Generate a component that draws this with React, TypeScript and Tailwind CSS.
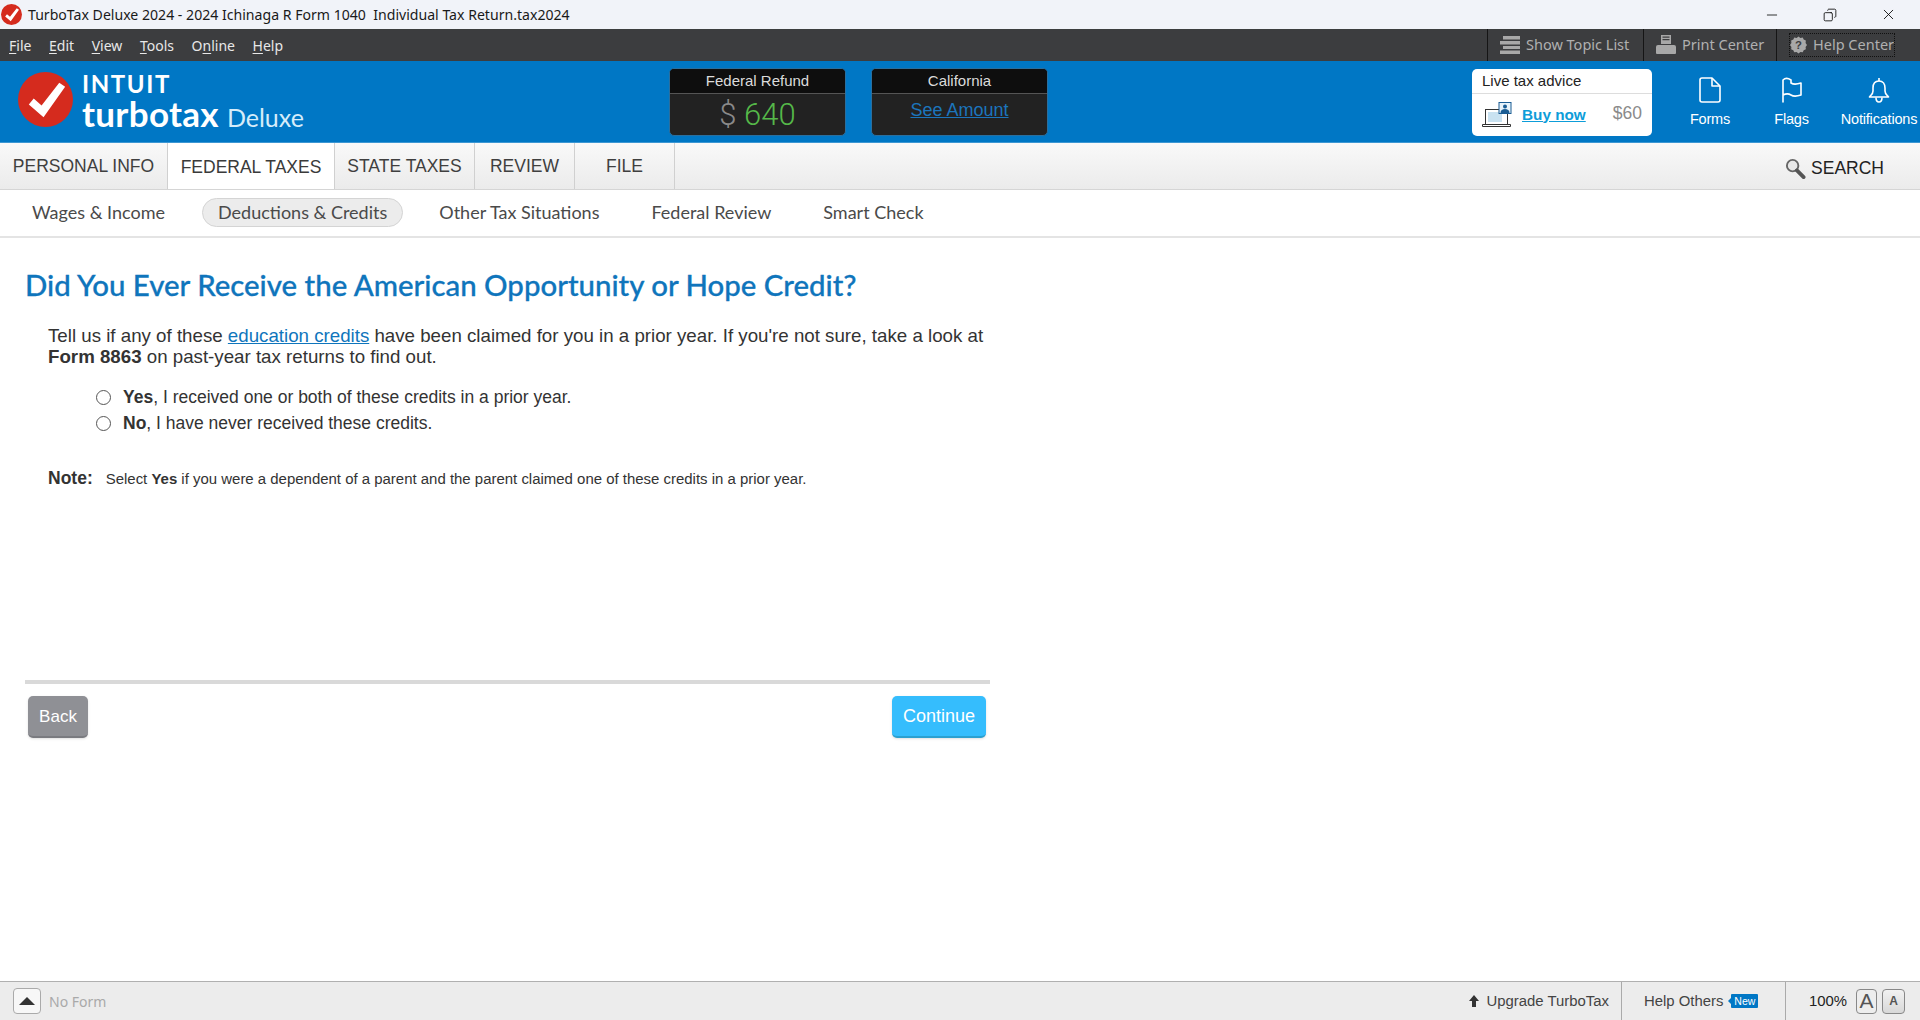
import type { ReactNode } from 'react';
import { Copy, Minus, X } from 'lucide-react';

const arial = "font-['Liberation_Sans',Arial,sans-serif]";

function Mnemonic({ before = '', letter, after }: { before?: string; letter: string; after: string }) {
  return (
    <span>
      {before}
      <span className="underline underline-offset-2">{letter}</span>
      {after}
    </span>
  );
}

function CheckLogo({ size }: { size: number }) {
  return (
    <svg width={size} height={size} viewBox="0 0 56 56" className="shrink-0">
      <circle cx="28" cy="28" r="28" fill="#d52b1e" />
      <path d="M11 33l5-6 8 7L42 11l6 4-22 31z" fill="#fff" />
    </svg>
  );
}

function TitleBar() {
  return (
    <div className="flex h-[29px] items-center bg-[#f1f3f9] pl-[1px] font-['Noto_Sans',sans-serif] text-[14.1px] text-[#1a1a1a]">
      <CheckLogo size={21} />
      <span className="ml-[6px] whitespace-pre">TurboTax Deluxe 2024 - 2024 Ichinaga R Form 1040  Individual Tax Return.tax2024</span>
      <div className="ml-auto flex items-center gap-[43px] pr-[23px] text-black">
        <Minus size={16} strokeWidth={1.2} />
        <Copy size={14} strokeWidth={1.4} className="-scale-x-100" />
        <X size={17} strokeWidth={1.2} />
      </div>
    </div>
  );
}

function ToolButton({ icon, label, className, dotted }: { icon: ReactNode; label: string; className: string; dotted?: boolean }) {
  return (
    <div className={`flex h-full items-center border-l border-[#151515] ${className}`}>
      <div className={`flex items-center gap-[6px] whitespace-nowrap ${dotted ? 'outline-1 outline-dotted outline-[#111]' : ''}`}>
        {icon}
        <span>{label}</span>
      </div>
    </div>
  );
}

function MenuBar() {
  return (
    <div className="flex h-[32px] items-center bg-[#3c3d3f] font-['Noto_Sans',sans-serif] text-[14px]">
      <div className="flex gap-[17.6px] pl-[9px] text-[#e8e8e8]">
        <Mnemonic letter="F" after="ile" />
        <Mnemonic letter="E" after="dit" />
        <Mnemonic letter="V" after="iew" />
        <Mnemonic letter="T" after="ools" />
        <Mnemonic before="O" letter="n" after="line" />
        <Mnemonic letter="H" after="elp" />
      </div>
      <div className="ml-auto flex h-full text-[14.5px] text-[#b0b0b0]">
        <ToolButton
          className="w-[156px] pl-[12px]"
          label="Show Topic List"
          icon={
            <svg width="20" height="18" viewBox="0 0 20 18" fill="#a8a8a8">
              <rect x="3" y="0" width="17" height="3.5" />
              <rect x="0" y="5" width="20" height="3.5" />
              <rect x="3" y="10" width="17" height="3" />
              <rect x="0" y="14.5" width="20" height="3.5" />
            </svg>
          }
        />
        <ToolButton
          className="w-[133px] pl-[12px]"
          label="Print Center"
          icon={
            <svg width="20" height="20" viewBox="0 0 20 20" fill="#a8a8a8">
              <path d="M5 0h10v9H5zM6.5 1.5v1.2h7V1.5zM6.5 4v1.2h7V4z" fillRule="evenodd" />
              <path d="M2 10h16a2 2 0 0 1 2 2v6a1 1 0 0 1-1 1H1a1 1 0 0 1-1-1v-6a2 2 0 0 1 2-2z" />
            </svg>
          }
        />
        <ToolButton
          className="w-[144px] pl-[13px]"
          dotted
          label="Help Center"
          icon={
            <svg width="17" height="18" viewBox="0 0 18 18">
              <path d="M9 0l2 1.5 2.5-.5 1 2.3 2.3 1-.3 2.5L18 9l-1.5 2 .3 2.5-2.3 1-1 2.3-2.5-.5L9 18l-2-1.7-2.5.5-1-2.3-2.3-1 .3-2.5L0 9l1.5-2.2-.3-2.5 2.3-1 1-2.3 2.5.5z" fill="#a8a8a8" />
              <text x="9" y="13.5" textAnchor="middle" fontSize="12" fontWeight="700" fill="#3c3d3f" fontFamily="Liberation Sans">?</text>
            </svg>
          }
        />
      </div>
    </div>
  );
}

function BalanceBox({ title, children }: { title: string; children: ReactNode }) {
  return (
    <div className={`flex h-[68px] w-[177px] flex-col overflow-hidden rounded-[5px] border border-[#2a6f9f] bg-[#222222] ${arial}`}>
      <div className="flex h-[25px] shrink-0 items-center justify-center border-b border-[#555] bg-[#0e0e0e] pt-[1px] text-[15px] text-[#dcdcdc]">
        {title}
      </div>
      <div className="flex flex-1 justify-center">{children}</div>
    </div>
  );
}

function HeaderIcon({ icon, label, className }: { icon: ReactNode; label: string; className: string }) {
  return (
    <div className={`flex flex-col items-center text-white ${className}`}>
      <div className="flex h-[26px] items-center">{icon}</div>
      <span className={`mt-[8px] whitespace-nowrap text-[14.5px] leading-[16px] tracking-[-0.2px] ${arial}`}>{label}</span>
    </div>
  );
}

function Header() {
  return (
    <div className="relative flex h-[82px] items-start border-b border-[#3d97d3] bg-[#0077c5]">
      <div className="ml-[18px] mt-[11px]">
        <CheckLogo size={55} />
      </div>
      <div className="ml-[9px] mt-[12px] font-['Lato',sans-serif] text-white">
        <div className="text-[24px] font-bold leading-[22px] tracking-[1.6px]">INTUIT</div>
        <div className="flex items-baseline gap-[8px]">
          <span className="text-[35px] font-bold leading-[36px] tracking-[0.3px]">turbotax</span>
          <span className="text-[25px] text-[#d6ecfa]">Deluxe</span>
        </div>
      </div>
      <div className="absolute left-[669px] top-[7px] flex gap-[25px]">
        <BalanceBox title="Federal Refund">
          <div className="mt-[2px] font-['Roboto',sans-serif] text-[31px] font-light leading-[38px]">
            <span className="text-[#8a8a8a]">$</span> <span className="text-[#55b849]">640</span>
          </div>
        </BalanceBox>
        <BalanceBox title="California">
          <span className="mt-[4px] text-[18px] leading-[24px] text-[#1c75bc] underline">See Amount</span>
        </BalanceBox>
      </div>
      <div className={`absolute left-[1472px] top-[8px] flex h-[67px] w-[180px] flex-col rounded-[5px] bg-white ${arial}`}>
        <div className="flex h-[25px] shrink-0 items-center border-b border-[#ddd] pl-[10px] pt-[1px] text-[15px] text-[#222]">Live tax advice</div>
        <div className="flex flex-1 items-center pl-[10px] pr-[10px]">
          <svg width="30" height="26" viewBox="0 0 30 26" className="shrink-0">
            <rect x="3.5" y="7.5" width="22" height="15" fill="#fff" stroke="#333" />
            <rect x="6" y="10" width="14" height="10" fill="#c9e2f1" />
            <path d="M0.5 22.5h28v2h-28z" fill="#fff" stroke="#333" />
            <rect x="17" y="0.5" width="12" height="11" fill="#e8f3fa" stroke="#1b5d94" />
            <circle cx="23" cy="4.5" r="2" fill="#1b5d94" />
            <path d="M18.5 11c0-3 2-4 4.5-4s4.5 1 4.5 4z" fill="#1b5d94" />
          </svg>
          <span className="ml-[10px] text-[15.3px] font-bold text-[#0d9dd9] underline">Buy now</span>
          <span className="ml-auto mt-[-4px] text-[17.5px] text-[#8a8a8a]">$60</span>
        </div>
      </div>
      <div className="absolute left-[1672px] top-[16px] flex">
        <HeaderIcon
          className="w-[76px]"
          label="Forms"
          icon={
            <svg width="22" height="26" viewBox="0 0 22 26" fill="none" stroke="#fff" strokeWidth="1.6" strokeLinejoin="round">
              <path d="M3 1h10l8 8v14a2 2 0 0 1-2 2H3a2 2 0 0 1-2-2V3a2 2 0 0 1 2-2z" />
              <path d="M13 1v8h8" />
            </svg>
          }
        />
        <HeaderIcon
          className="w-[87px]"
          label="Flags"
          icon={
            <svg width="22" height="26" viewBox="0 0 22 26" fill="none" stroke="#fff" strokeWidth="1.6" strokeLinejoin="round" strokeLinecap="round">
              <path d="M2 25V3c2-2 5-2 8 0v3c3 2 7 1 10 0v12c-3 1-7 2-10 0-3-2-6-1-8 0" />
            </svg>
          }
        />
        <HeaderIcon
          className="w-[88px]"
          label="Notifications"
          icon={
            <svg width="22" height="26" viewBox="0 0 22 26" fill="none" stroke="#fff" strokeWidth="1.6" strokeLinejoin="round">
              <path d="M11 4c-4 0-6 3-6 7v3c0 3-2 4-3.5 6h19c-1.5-2-3.5-3-3.5-6v-3c0-4-2-7-6-7z" />
              <path d="M11 1v3" />
              <path d="M8 20.5c0 3 1.5 4.5 3 4.5s3-1.5 3-4.5" />
            </svg>
          }
        />
      </div>
    </div>
  );
}

function MainTab({ label, width, active }: { label: string; width: number; active?: boolean }) {
  return (
    <div
      style={{ width }}
      className={`flex shrink-0 items-center justify-center border-r border-[#d0d0d0] text-[17.5px] ${
        active ? 'bg-white pt-[2px] text-[#3a3a3a]' : 'text-[#3f3f3f]'
      }`}
    >
      {label}
    </div>
  );
}

function MainTabs() {
  return (
    <div className={`flex h-[47px] border-b border-[#d5d5d5] bg-gradient-to-b from-[#f9f9f9] to-[#ebebeb] ${arial}`}>
      <MainTab label="PERSONAL INFO" width={168} />
      <MainTab label="FEDERAL TAXES" width={167} active />
      <MainTab label="STATE TAXES" width={140} />
      <MainTab label="REVIEW" width={100} />
      <MainTab label="FILE" width={100} />
      <div className="ml-auto mr-[36px] flex items-center gap-[5px] pt-[4px] text-[17.5px] text-[#222]">
        <svg width="21" height="23" viewBox="0 0 22 24">
          <circle cx="8" cy="9" r="6" fill="#e8e8e8" stroke="#666" strokeWidth="2" />
          <path d="M12.5 14l7 7" stroke="#555" strokeWidth="4" strokeLinecap="round" />
        </svg>
        SEARCH
      </div>
    </div>
  );
}

function SubNav() {
  return (
    <div className="flex h-[48px] items-center border-b-2 border-[#e4e4e4] pb-[1px] font-['Lato',sans-serif] text-[18px] text-[#4a4a4a]">
      <span className="ml-[32px]">Wages &amp; Income</span>
      <span className="ml-[37px] flex h-[29px] items-center rounded-full border border-[#d4d4d4] bg-[#ececec] px-[15px]">
        Deductions &amp; Credits
      </span>
      <span className="ml-[36px]">Other Tax Situations</span>
      <span className="ml-[52px]">Federal Review</span>
      <span className="ml-[52px]">Smart Check</span>
    </div>
  );
}

function RadioRow({ bold, rest }: { bold: string; rest: string }) {
  return (
    <label className="flex h-[26px] items-center">
      <span className="box-border h-[15px] w-[15px] rounded-full border border-[#555] bg-white" />
      <span className="ml-[12px] text-[#333]">
        <b>{bold}</b>
        {rest}
      </span>
    </label>
  );
}

function Question() {
  return (
    <div className="w-[990px] flex-1 pl-[25px]">
      <h1 className="mt-[29px] font-['Lato',sans-serif] text-[29.4px] font-medium leading-[36px] text-[#0f75bc] [-webkit-text-stroke:0.3px_#0f75bc]">
        Did You Ever Receive the American Opportunity or Hope Credit?
      </h1>
      <div className={`ml-[23px] ${arial}`}>
        <p className="mt-[22px] whitespace-nowrap text-[18.72px] leading-[21px] text-[#333]">
          Tell us if any of these <span className="text-[#0f75bc] underline">education credits</span> have been
          claimed for you in a prior year. If you're not sure, take a look at
          <br />
          <b>Form 8863</b> on past-year tax returns to find out.
        </p>
        <div className="ml-[48px] mt-[17px] text-[17.5px]">
          <RadioRow bold="Yes" rest=", I received one or both of these credits in a prior year." />
          <RadioRow bold="No" rest=", I have never received these credits." />
        </div>
        <div className="mt-[29px] flex items-baseline gap-[13px] text-[#333]">
          <b className="text-[17.5px]">Note:</b>
          <span className="text-[14.96px]">
            Select <b>Yes</b> if you were a dependent of a parent and the parent claimed one of these credits in a
            prior year.
          </span>
        </div>
      </div>
      <div className="mt-[189px] h-[4px] bg-[#d9d9d9]" />
      <div className={`mt-[12px] flex justify-between pl-[3px] pr-[4px] ${arial}`}>
        <button className="h-[42px] w-[60px] rounded-[5px] border-b-2 border-[#7a7b80] bg-[#8f9095] text-[17px] text-white shadow-sm">
          Back
        </button>
        <button className="h-[42px] w-[94px] rounded-[5px] border-b-2 border-[#2ba0d0] bg-[#35bdfd] text-[18px] text-white shadow-sm">
          Continue
        </button>
      </div>
    </div>
  );
}

function StatusBar() {
  return (
    <div className={`flex h-[39px] items-stretch border-t border-[#b0b0b0] bg-[#ececec] ${arial}`}>
      <div className="flex items-center pl-[13px]">
        <div className="flex h-[26px] w-[28px] items-center justify-center rounded-[4px] border border-[#aaa] bg-[#f7f7f7]">
          <div className="h-0 w-0 border-x-[8px] border-b-[8px] border-x-transparent border-b-[#333]" />
        </div>
        <span className="ml-[8px] font-['Noto_Sans',sans-serif] text-[14px] text-[#a9a9a9]">No Form</span>
      </div>
      <div className="ml-auto flex items-center pr-[15px] text-[14.9px] text-[#444]">
        <svg width="12" height="14" viewBox="0 0 12 14" className="mr-[6px]">
          <path d="M6 1l5 6H8v6H4V7H1z" fill="#333" />
        </svg>
        <span className="pr-[12px]">Upgrade TurboTax</span>
        <div className="flex h-full w-[165px] items-center border-x border-[#aaa] pl-[22px]">
          Help Others
          <span className="relative ml-[8px] rounded-[1px] bg-[#0077c5] px-[3px] text-[10.5px] leading-[14px] text-white before:absolute before:-left-[3px] before:top-[4px] before:border-y-[3px] before:border-r-[3px] before:border-y-transparent before:border-r-[#0077c5]">
            New
          </span>
        </div>
        <span className="ml-[23px] text-[#222]">100%</span>
        <div className="ml-[9px] flex h-[25px] w-[21px] items-center justify-center rounded-[4px] border border-[#888] bg-[#ededed] text-[21px] text-[#555]">A</div>
        <div className="ml-[5px] flex h-[25px] w-[23px] items-center justify-center rounded-[4px] border border-[#888] bg-gradient-to-b from-[#f2f2f2] to-[#d8d8d8] text-[12px] font-bold text-[#555]">A</div>
      </div>
    </div>
  );
}

export default function App() {
  return (
    <div className="flex h-[1020px] flex-col bg-white">
      <TitleBar />
      <MenuBar />
      <Header />
      <MainTabs />
      <SubNav />
      <Question />
      <StatusBar />
    </div>
  );
}
